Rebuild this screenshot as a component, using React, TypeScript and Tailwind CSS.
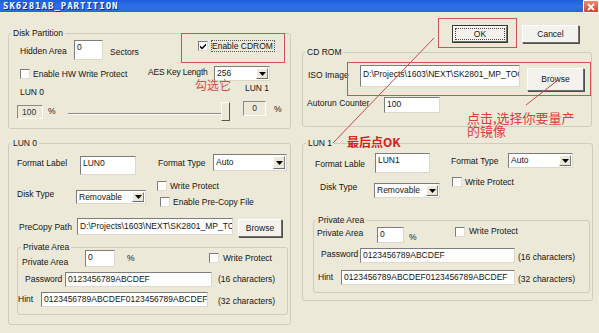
import React from "react";

type P = { c?: string; children?: React.ReactNode };

function T({ c = "", children }: P) {
  return <div className={`shrink-0 leading-[11px] whitespace-nowrap ${c}`}>{children}</div>;
}

function Row({ c = "", children }: P) {
  return <div className={`flex items-start shrink-0 ${c}`}>{children}</div>;
}

function Edit({ c = "", v }: { c?: string; v: string }) {
  return (
    <div
      className={`shrink-0 bg-white border border-t-[#7d7d7d] border-l-[#7d7d7d] border-r-[#dcd9cc] border-b-[#dcd9cc] overflow-hidden whitespace-nowrap pl-[2px] pt-[1px] leading-[11px] ${c}`}
    >
      {v}
    </div>
  );
}

function Dis({ c = "", v }: { c?: string; v: string }) {
  return (
    <div
      className={`shrink-0 bg-[#ece9d8] border border-t-[#8a8a8a] border-l-[#8a8a8a] border-r-[#ffffff] border-b-[#ffffff] overflow-hidden whitespace-nowrap leading-[11px] text-[#333] ${c}`}
    >
      {v}
    </div>
  );
}

function Sel({ c = "", v }: { c?: string; v: string }) {
  return (
    <div
      className={`shrink-0 flex bg-white border border-t-[#7d7d7d] border-l-[#7d7d7d] border-r-[#dcd9cc] border-b-[#dcd9cc] ${c}`}
    >
      <div className="flex-1 flex items-center pl-[2px] leading-[11px] overflow-hidden whitespace-nowrap">{v}</div>
      <div className="w-[12px] m-[1px] bg-[#ece9d8] border border-t-white border-l-white border-r-[#7d7d7d] border-b-[#6a6a6a] flex items-center justify-center">
        <svg width="7" height="4" viewBox="0 0 7 4">
          <path d="M0 0H7L3.5 4Z" fill="#000" />
        </svg>
      </div>
    </div>
  );
}

function Chk({ c = "", on = false }: { c?: string; on?: boolean }) {
  return (
    <div
      className={`shrink-0 w-[10px] h-[10px] bg-white border border-t-[#7d7d7d] border-l-[#7d7d7d] border-r-[#e2dfd2] border-b-[#e2dfd2] flex items-center justify-center ${c}`}
    >
      {on && (
        <svg width="8" height="8" viewBox="0 0 8 8">
          <path d="M1 3.5L3 5.5L7 1.5V3.5L3 7.5L1 5.5Z" fill="#000" />
        </svg>
      )}
    </div>
  );
}

function Btn({ c = "", children, def = false }: P & { def?: boolean }) {
  if (def) {
    return (
      <div className={`shrink-0 border border-[#3a3a3a] flex ${c}`}>
        <div className="flex-1 flex bg-[#f3f2ec] border border-t-white border-l-white border-r-[#716f64] border-b-[#716f64] p-[1px]">
          <div className="flex-1 flex items-center justify-center border border-dotted border-[#444] leading-[11px]">
            {children}
          </div>
        </div>
      </div>
    );
  }
  return (
    <div
      className={`shrink-0 flex items-center justify-center bg-[#f3f2ec] border border-t-white border-l-white border-r-[#716f64] border-b-[#716f64] shadow-[1px_1px_0_#505050] leading-[11px] ${c}`}
    >
      {children}
    </div>
  );
}

function Group({ c = "", label, lc = "left-[2px]", children }: P & { label: string; lc?: string }) {
  return (
    <div className={`relative shrink-0 border border-[#cfcdbf] rounded-[3px] ${c}`}>
      <div className={`absolute -top-[6px] px-[2px] bg-[#ece9d8] leading-[11px] whitespace-nowrap ${lc}`}>{label}</div>
      {children}
    </div>
  );
}

const PATH = "D:\\Projects\\1603\\NEXT\\SK2801_MP_TOOL";

export default function App() {
  return (
    <div className="relative w-[599px] h-[333px] overflow-hidden bg-[#ece9d8] text-[8.5px] text-[#151515] font-['Liberation_Sans',Arial,sans-serif]">
      {/* title bar */}
      <div className="h-[12px] flex items-center justify-between bg-gradient-to-b from-[#1d5fdc] via-[#2e6fe6] to-[#2a66dc]">
        <div className="pl-[3px] text-white font-bold text-[9px] leading-[10px] tracking-[1px] font-['DejaVu_Sans_Mono',monospace] [text-shadow:1px_1px_0_#0a2a80]">
          SK6281AB_PARTITION
        </div>
        <div className="w-[16px] h-[13px] self-start bg-gradient-to-b from-[#f08a6a] to-[#d2421e] border border-white rounded-bl-[2px] flex items-center justify-center">
          <svg width="8" height="8" viewBox="0 0 8 8">
            <path d="M1 1L7 7M7 1L1 7" stroke="#fff" strokeWidth="1.8" />
          </svg>
        </div>
      </div>

      <div className="flex pl-[8px] gap-[11px]">
        {/* LEFT COLUMN */}
        <div className="flex flex-col w-[283px] shrink-0">
          <Group c="mt-[21px] w-[283px] h-[96px]" label="Disk Partition">
            <Row c="mt-[5px] h-[23px]">
              <T c="ml-[11px] w-[54px] mt-[7px]">Hidden Area</T>
              <Edit c="w-[29px] h-[20px] mt-[1px]" v="0" />
              <T c="ml-[7px] w-[88px] mt-[8px]">Sectors</T>
              <Chk c="mt-[2px]" on />
              <div className="ml-[3px] mt-[1px] h-[12px] border border-dotted border-[#555] leading-[10px] whitespace-nowrap pr-[1px]">
                Enable CDROM
              </div>
            </Row>
            <Row c="mt-[4px] h-[15px]">
              <Chk c="ml-[11px] mt-[3px]" />
              <T c="ml-[3px] w-[115px] mt-[3px]">Enable HW Write Protect</T>
              <T c="w-[66px] mt-[1px] tracking-[-0.2px]">AES Key Length</T>
              <Sel c="w-[56px] h-[15px]" v="256" />
            </Row>
            <Row c="mt-[2px] h-[15px]">
              <T c="ml-[11px] w-[225px] mt-[4px]">LUN 0</T>
              <T>LUN 1</T>
            </Row>
            <Row c="mt-[3px] h-[22px]">
              <Dis c="ml-[8px] w-[26px] h-[14px] mt-[4px] pl-[4px] pt-[1px]" v="100" />
              <T c="ml-[5px] w-[20px] mt-[5px]">%</T>
              <div className="relative w-[163px] h-[20px] mt-[1px] shrink-0">
                <div className="mt-[11px] w-[160px] h-[2px] border-t border-t-[#8a8a8a] border-b border-b-white" />
                <div className="absolute left-[153px] top-0 w-[9px] h-[19px] bg-[#ece9d8] border border-t-white border-l-white border-r-[#555] border-b-[#555]" />
              </div>
              <Dis c="ml-[12px] w-[23px] h-[15px] text-center pt-[1px]" v="0" />
              <T c="ml-[8px] mt-[3px]">%</T>
            </Row>
          </Group>

          <Group c="mt-[14px] w-[283px] h-[182px]" label="LUN 0">
            <Row c="mt-[10px] h-[21px]">
              <T c="ml-[8px] w-[63px] mt-[4px]">Format Label</T>
              <Edit c="w-[56px] h-[19px] mt-[2px]" v="LUN0" />
              <T c="ml-[22px] w-[55px] mt-[4px]">Format Type</T>
              <Sel c="w-[74px] h-[17px]" v="Auto" />
            </Row>
            <Row c="mt-[5px] h-[27px]">
              <T c="ml-[8px] w-[59px] mt-[9px]">Disk Type</T>
              <Sel c="w-[70px] h-[14px] mt-[10px]" v="Removable" />
              <div className="ml-[11px] flex flex-col shrink-0">
                <div className="flex items-center mt-[1px] h-[10px]">
                  <Chk />
                  <T c="ml-[3px]">Write Protect</T>
                </div>
                <div className="flex items-center mt-[6px] ml-[3px] h-[10px]">
                  <Chk />
                  <T c="ml-[3px]">Enable Pre-Copy File</T>
                </div>
              </div>
            </Row>
            <Row c="mt-[11px] h-[19px]">
              <T c="ml-[10px] w-[58px] mt-[4px]">PreCopy Path</T>
              <Edit c="w-[156px] h-[17px] pt-[2px]" v={PATH} />
              <Btn c="ml-[5px] w-[44px] h-[18px] mt-[1px]">Browse</Btn>
            </Row>
            <Group c="ml-[8px] mt-[10px] w-[271px] h-[68px]" label="Private Area" lc="left-[3px]">
              <Row c="mt-[2px] h-[17px]">
                <T c="ml-[4px] w-[63px] mt-[7px]">Private Area</T>
                <Edit c="w-[30px] h-[17px]" v="0" />
                <T c="ml-[12px] w-[82px] mt-[3px]">%</T>
                <Chk c="mt-[3px]" />
                <T c="ml-[4px] mt-[3px]">Write Protect</T>
              </Row>
              <Row c="mt-[5px] h-[15px]">
                <T c="ml-[7px] w-[40px] mt-[2px]">Password</T>
                <Edit c="w-[147px] h-[15px]" v="0123456789ABCDEF" />
                <T c="ml-[6px] mt-[2px]">(16 characters)</T>
              </Row>
              <Row c="mt-[5px] h-[15px]">
                <T c="w-[23px] mt-[2px]">Hint</T>
                <Edit c="w-[167px] h-[15px]" v="0123456789ABCDEF0123456789ABCDEF" />
                <T c="ml-[10px] mt-[4px]">(32 characters)</T>
              </Row>
            </Group>
          </Group>
        </div>

        {/* RIGHT COLUMN */}
        <div className="flex flex-col w-[291px] shrink-0">
          <Row c="mt-[13px] h-[18px]">
            <Btn c="ml-[150px] w-[56px] h-[18px]" def>
              OK
            </Btn>
            <Btn c="ml-[14px] w-[57px] h-[18px]">Cancel</Btn>
          </Row>

          <Group c="mt-[9px] w-[290px] h-[75px]" label="CD ROM">
            <Row c="mt-[12px] h-[26px]">
              <T c="ml-[5px] w-[52px] mt-[5px]">ISO Image</T>
              <Edit c="w-[160px] h-[22px] pt-[3px]" v={PATH} />
              <Btn c="ml-[7px] w-[57px] h-[23px] mt-[3px]">Browse</Btn>
            </Row>
            <Row c="mt-[6px] h-[16px]">
              <T c="ml-[4px] w-[77px] mt-[1px]">Autorun Counter</T>
              <Edit c="w-[56px] h-[16px]" v="100" />
            </Row>
          </Group>

          <Group c="mt-[16px] w-[291px] h-[158px]" label="LUN 1" lc="left-[3px]">
            <Row c="mt-[9px] h-[20px]">
              <T c="ml-[12px] w-[60px] mt-[6px]">Format Lable</T>
              <Edit c="w-[55px] h-[20px]" v="LUN1" />
              <T c="ml-[21px] w-[57px] mt-[3px]">Format Type</T>
              <Sel c="w-[65px] h-[15px]" v="Auto" />
            </Row>
            <Row c="mt-[4px] h-[21px]">
              <T c="ml-[17px] w-[54px] mt-[5px]">Disk Type</T>
              <Sel c="w-[66px] h-[15px] mt-[6px]" v="Removable" />
              <Chk c="ml-[12px]" />
              <T c="ml-[3px]">Write Protect</T>
            </Row>
            <Group c="ml-[10px] mt-[22px] w-[277px] h-[73px]" label="Private Area" lc="left-[2px]">
              <Row c="mt-[5px] h-[17px]">
                <T c="ml-[3px] w-[60px] mt-[2px]">Private Area</T>
                <Edit c="w-[27px] h-[16px] mt-[1px]" v="0" />
                <T c="ml-[5px] w-[46px] mt-[6px]">%</T>
                <Chk c="mt-[1px]" />
                <T c="ml-[4px]">Write Protect</T>
              </Row>
              <Row c="mt-[5px] h-[15px]">
                <T c="ml-[7px] w-[39px] mt-[1px]">Password</T>
                <Edit c="w-[155px] h-[15px]" v="0123456789ABCDEF" />
                <T c="ml-[3px] mt-[4px]">(16 characters)</T>
              </Row>
              <Row c="mt-[7px] h-[15px]">
                <T c="ml-[4px] w-[23px] mt-[2px]">Hint</T>
                <Edit c="w-[174px] h-[15px]" v="0123456789ABCDEF0123456789ABCDEF" />
                <T c="ml-[3px] mt-[4px]">(32 characters)</T>
              </Row>
            </Group>
          </Group>
        </div>
      </div>

      {/* annotations */}
      <div className="absolute left-[181px] top-[33px] w-[104px] h-[30px] border border-[#cc5555]" />
      <div className="absolute left-[438px] top-[18px] w-[79px] h-[30px] border border-[#cc5555]" />
      <div className="absolute left-[347px] top-[62px] w-[244px] h-[34px] border border-[#cc5555]" />
      <svg className="absolute left-0 top-0 pointer-events-none" width="599" height="333" viewBox="0 0 599 333">
        <line x1="434" y1="38" x2="333" y2="143" stroke="#c84a4a" strokeWidth="1" />
        <line x1="558" y1="80" x2="526" y2="105" stroke="#c84a4a" strokeWidth="1" />
      </svg>
      <div className="absolute left-[195px] top-[78px] text-[12px] leading-[13px] text-[#e04a4a] font-['Noto_Sans_CJK_SC',sans-serif]">
        勾选它
      </div>
      <div className="absolute left-[467px] top-[111px] text-[13px] leading-[13px] text-[#e03c3c] font-['Noto_Sans_CJK_SC',sans-serif] whitespace-nowrap">
        点击,选择你要量产
        <br />
        的镜像
      </div>
      <div className="absolute left-[347px] top-[135px] text-[12px] leading-[14px] font-bold text-[#d42020] font-['Noto_Sans_CJK_SC',sans-serif] whitespace-nowrap">
        最后点OK
      </div>
    </div>
  );
}
